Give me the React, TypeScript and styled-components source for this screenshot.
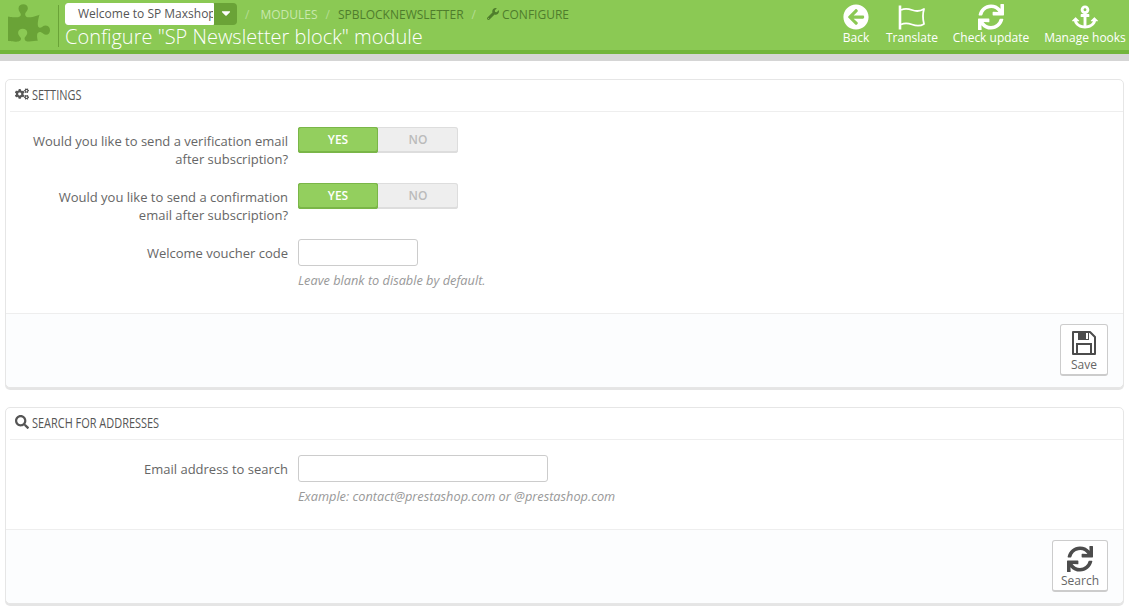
import * as React from 'react';
import styled, { createGlobalStyle } from 'styled-components';
import {
    FaAnchor,
    FaArrowCircleLeft,
    FaCaretDown,
    FaCogs,
    FaPuzzlePiece,
    FaSearch,
    FaSync,
    FaWrench,
} from 'react-icons/fa';

const GlobalStyle = createGlobalStyle`
    html, body {
        margin: 0;
        padding: 0;
        height: 613px;
        overflow: hidden;
        background: #fff;
        font-family: "Open Sans", "Liberation Sans", sans-serif;
        font-size: 13px;
        color: #666;
    }
    * {
        box-sizing: border-box;
    }
`;

const Header = styled.header`
    display: flex;
    height: 54px;
    background: #8bc954;
    border-bottom: 4px solid #72b53b;
    padding-left: 8px;
`;

const Logo = styled.div`
    width: 50px;
    padding-top: 2px;
    color: #6aa337;
    font-size: 42px;
    line-height: 0;
`;

const TitleBlock = styled.div`
    flex: 1;
    height: 42px;
    margin-top: 5px;
    padding-left: 6px;
    border-left: 1px solid #6aa337;
`;

const BreadcrumbRow = styled.div`
    display: flex;
    align-items: center;
    height: 22px;
    margin-top: -2px;
`;

const ShopSelect = styled.div`
    display: flex;
    flex: none;
    width: 172px;
    height: 22px;
    background: #6aa337;
    border-radius: 4px;
`;

const ShopName = styled.div`
    width: 149px;
    padding-left: 12px;
    background: #fff;
    border-radius: 3px 0 0 3px;
    border: 1px solid #fff;
    color: #555;
    font-size: 12px;
    line-height: 20px;
    white-space: nowrap;
    overflow: hidden;
`;

const ShopCaret = styled.div`
    flex: 1;
    display: flex;
    justify-content: center;
    padding-top: 3px;
    color: #fff;
    font-size: 14px;
`;

const Crumb = styled.span<{ $tone?: 'light' | 'dark' }>`
    display: inline-flex;
    align-items: center;
    gap: 3px;
    font-size: 12px;
    white-space: nowrap;
    text-transform: uppercase;
    margin-left: ${(props) => (props.$tone === 'light' ? '3px' : '0')};
    color: ${(props) => (props.$tone === 'light' ? '#c9e8ad' : '#4f7d2c')};
    svg {
        margin-left: 3px;
    }
`;

const CrumbSlash = styled.span`
    margin: 0 8px;
    font-size: 12px;
    color: #b5dd92;
`;

const PageTitle = styled.h2`
    margin: 0;
    font-size: 20px;
    font-weight: 300;
    line-height: 24px;
    color: #fff;
    white-space: nowrap;
`;

const Toolbar = styled.nav`
    display: flex;
    align-items: flex-start;
    padding-right: 1px;
`;

const ToolButton = styled.a<{ $width: number }>`
    display: flex;
    flex-direction: column;
    align-items: center;
    width: ${(props) => props.$width}px;
    color: #fff;
    font-size: 12px;
    white-space: nowrap;
`;

const ToolIcon = styled.span`
    display: flex;
    align-items: center;
    justify-content: center;
    height: 26px;
    margin-top: 4px;
    font-size: 26px;
    line-height: 0;
`;

const ToolLabel = styled.span`
    line-height: 16px;
`;

const GreyBar = styled.div`
    height: 7px;
    background: #d5d5d5;
`;

const Content = styled.main`
    display: flex;
    flex-direction: column;
    gap: 19px;
    padding: 18px 5px 0;
`;

const Panel = styled.section`
    background: #fff;
    border: 1px solid #e6e6e6;
    border-radius: 5px;
    box-shadow: 0 2px 0 rgba(0, 0, 0, 0.1);
`;

const PanelHeading = styled.h3`
    display: flex;
    align-items: center;
    gap: 3px;
    height: 32px;
    margin: 0 0 0 4px;
    padding: 0 0 3px 5px;
    border-bottom: 1px solid #eee;
    color: #555;
    font-size: 15px;
    font-weight: 400;
    text-transform: uppercase;
    svg {
        font-size: 14px;
    }
`;

const HeadingText = styled.span`
    display: inline-block;
    white-space: nowrap;
    transform: scaleX(0.73);
    transform-origin: left center;
`;

const PanelForm = styled.div<{ $height: number }>`
    display: flex;
    flex-direction: column;
    gap: 15px;
    height: ${(props) => props.$height}px;
    padding-top: 15px;
`;

const FormRow = styled.div`
    display: flex;
    gap: 10px;
`;

const RowLabel = styled.label`
    flex: none;
    width: 282px;
    padding-top: 5px;
    color: #666;
    font-size: 13px;
    line-height: 18px;
    text-align: right;
`;

const RowField = styled.div`
    display: flex;
    flex-direction: column;
`;

const SwitchBox = styled.div`
    display: flex;
    width: 160px;
    height: 26px;
    border-radius: 3px;
    background: #eee;
    box-shadow: inset 0 0 0 1px #ddd, inset 0 -2px 0 #ddd;
    font-size: 12px;
    font-weight: 600;
`;

const SwitchOption = styled.span<{ $active?: boolean }>`
    display: flex;
    align-items: center;
    justify-content: center;
    width: 80px;
    padding-bottom: 2px;
    border-radius: 3px;
    color: ${(props) => (props.$active ? '#fff' : '#bbb')};
    background: ${(props) => (props.$active ? '#93cf5e' : 'transparent')};
    box-shadow: ${(props) => (props.$active ? 'inset 0 0 0 1px #7ab648, inset 0 -1px 0 1px #7ab648' : 'none')};
`;

const TextInput = styled.input<{ $width: number }>`
    display: block;
    width: ${(props) => props.$width}px;
    height: 27px;
    padding: 0 8px;
    background: #fff;
    border: 1px solid #ccc;
    border-radius: 3px;
`;

const HelpText = styled.p`
    margin: 5px 0 0;
    color: #999;
    font-size: 12.75px;
    font-style: italic;
    line-height: 18px;
    white-space: nowrap;
`;

const PanelFooter = styled.footer`
    display: flex;
    justify-content: flex-end;
    height: 74px;
    padding: 10px 15px 0 0;
    background: #fcfdfe;
    border-top: 1px solid #eee;
    border-radius: 0 0 5px 5px;
`;

const IconButton = styled.button<{ $width: number }>`
    display: flex;
    flex-direction: column;
    align-items: center;
    width: ${(props) => props.$width}px;
    height: 52px;
    padding: 5px 0 0;
    background: #fff;
    border: 1px solid #ccc;
    border-bottom-width: 2px;
    border-radius: 3px;
    color: #666;
    font-family: inherit;
    font-size: 12px;
    line-height: 16px;
    svg {
        color: #4c4c4c;
        font-size: 26px;
        margin-bottom: 1px;
    }
`;

const FlagIcon: React.FC = (): JSX.Element => {
    return (
        <svg width="28" height="25" viewBox="0 0 28 25" fill="none" stroke="#fff" strokeWidth="1.8">
            <path d="M2 0.500v24" strokeWidth="2.6" />
            <path d="M3 5c4-2 7-1.500 11 0s8 1.500 12-1c-1.500 5-1.500 9 0 15-4 2.500-8 2-12 0.500s-7-2-11 0" strokeLinejoin="round" />
        </svg>
    );
};

const SaveIcon: React.FC = (): JSX.Element => {
    return (
        <svg width="26" height="26" viewBox="0 0 26 26" fill="none" stroke="currentColor" strokeWidth="2">
            <path d="M2 2h17l5 5v17H2z" strokeLinejoin="round" />
            <path d="M7 2h11v8H7z" fill="currentColor" stroke="none" />
            <path d="M15 3h2v6h-2z" fill="#fff" stroke="none" />
            <path d="M6 24V14h14v10" />
        </svg>
    );
};

const tools = [
    { label: 'Back', width: 56, icon: <FaArrowCircleLeft /> },
    { label: 'Translate', width: 56, icon: <FlagIcon /> },
    { label: 'Check update', width: 102, icon: <FaSync /> },
    { label: 'Manage hooks', width: 86, icon: <FaAnchor /> },
];

const YesNoSwitch: React.FC = (): JSX.Element => {
    return (
        <SwitchBox>
            <SwitchOption $active>YES</SwitchOption>
            <SwitchOption>NO</SwitchOption>
        </SwitchBox>
    );
};

const App: React.FC = (): JSX.Element => {
    return (
        <>
            <GlobalStyle />
            <Header>
                <Logo>
                    <FaPuzzlePiece />
                </Logo>
                <TitleBlock>
                    <BreadcrumbRow>
                        <ShopSelect>
                            <ShopName>Welcome to SP Maxshop</ShopName>
                            <ShopCaret>
                                <FaCaretDown />
                            </ShopCaret>
                        </ShopSelect>
                        <CrumbSlash>/</CrumbSlash>
                        <Crumb $tone="light">Modules</Crumb>
                        <CrumbSlash>/</CrumbSlash>
                        <Crumb>spblocknewsletter</Crumb>
                        <CrumbSlash>/</CrumbSlash>
                        <Crumb>
                            <FaWrench />
                            Configure
                        </Crumb>
                    </BreadcrumbRow>
                    <PageTitle>Configure "SP Newsletter block" module</PageTitle>
                </TitleBlock>
                <Toolbar>
                    {tools.map((tool) => {
                        return (
                            <ToolButton key={tool.label} $width={tool.width}>
                                <ToolIcon>{tool.icon}</ToolIcon>
                                <ToolLabel>{tool.label}</ToolLabel>
                            </ToolButton>
                        );
                    })}
                </Toolbar>
            </Header>
            <GreyBar />
            <Content>
                <Panel>
                    <PanelHeading>
                        <FaCogs />
                        <HeadingText>Settings</HeadingText>
                    </PanelHeading>
                    <PanelForm $height={201}>
                        <FormRow>
                            <RowLabel>
                                Would you like to send a verification email
                                <br />
                                after subscription?
                            </RowLabel>
                            <RowField>
                                <YesNoSwitch />
                            </RowField>
                        </FormRow>
                        <FormRow>
                            <RowLabel>
                                Would you like to send a confirmation
                                <br />
                                email after subscription?
                            </RowLabel>
                            <RowField>
                                <YesNoSwitch />
                            </RowField>
                        </FormRow>
                        <FormRow>
                            <RowLabel>Welcome voucher code</RowLabel>
                            <RowField>
                                <TextInput $width={120} />
                                <HelpText>Leave blank to disable by default.</HelpText>
                            </RowField>
                        </FormRow>
                    </PanelForm>
                    <PanelFooter>
                        <IconButton $width={48}>
                            <SaveIcon />
                            Save
                        </IconButton>
                    </PanelFooter>
                </Panel>
                <Panel>
                    <PanelHeading>
                        <FaSearch />
                        <HeadingText>Search for addresses</HeadingText>
                    </PanelHeading>
                    <PanelForm $height={89}>
                        <FormRow>
                            <RowLabel>Email address to search</RowLabel>
                            <RowField>
                                <TextInput $width={250} />
                                <HelpText>Example: contact@prestashop.com or @prestashop.com</HelpText>
                            </RowField>
                        </FormRow>
                    </PanelForm>
                    <PanelFooter>
                        <IconButton $width={56}>
                            <FaSync />
                            Search
                        </IconButton>
                    </PanelFooter>
                </Panel>
            </Content>
        </>
    );
};

export default App;
